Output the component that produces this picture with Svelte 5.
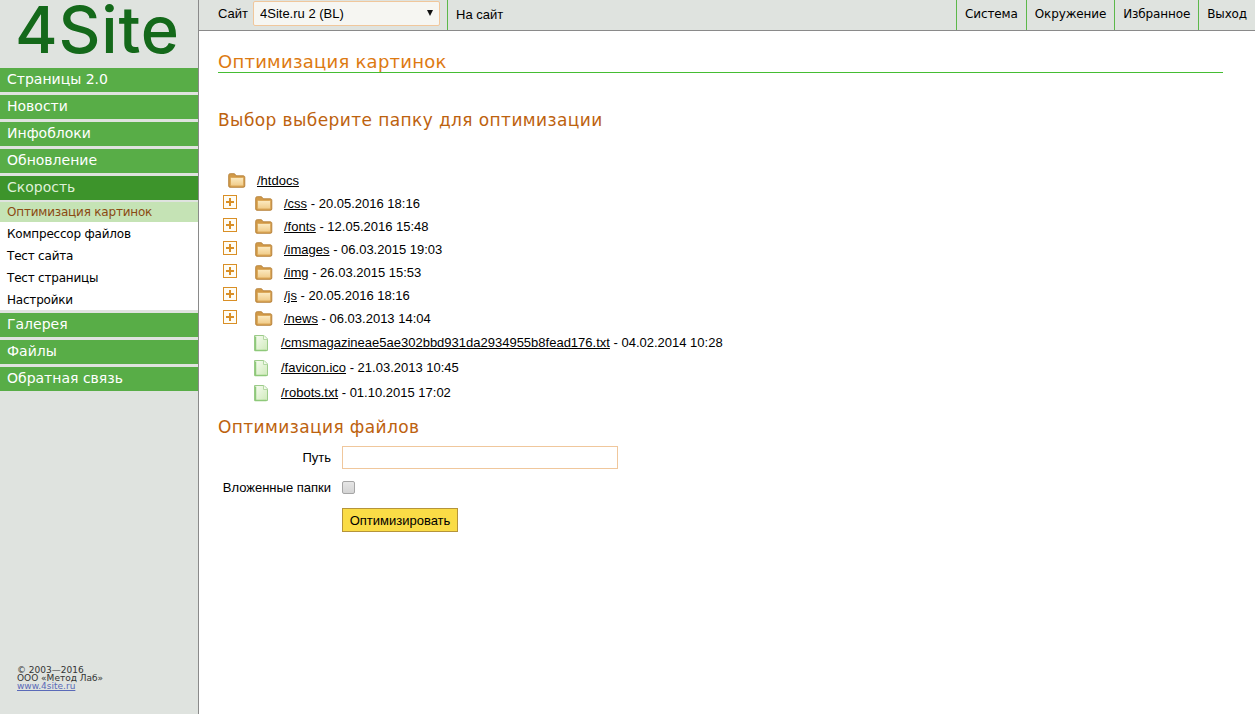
<script>
  const menuTop = ['Страницы 2.0', 'Новости', 'Инфоблоки', 'Обновление'];
  const subMenu = ['Оптимизация картинок', 'Компрессор файлов', 'Тест сайта', 'Тест страницы', 'Настройки'];
  const menuBottom = ['Галерея', 'Файлы', 'Обратная связь'];
  const topLinks = ['Система', 'Окружение', 'Избранное', 'Выход'];
  const folders = [
    { name: '/css', date: '20.05.2016 18:16' },
    { name: '/fonts', date: '12.05.2016 15:48' },
    { name: '/images', date: '06.03.2015 19:03' },
    { name: '/img', date: '26.03.2015 15:53' },
    { name: '/js', date: '20.05.2016 18:16' },
    { name: '/news', date: '06.03.2013 14:04' }
  ];
  const files = [
    { name: '/cmsmagazineae5ae302bbd931da2934955b8fead176.txt', date: '04.02.2014 10:28' },
    { name: '/favicon.ico', date: '21.03.2013 10:45' },
    { name: '/robots.txt', date: '01.10.2015 17:02' }
  ];
</script>

{#snippet folder()}
  <svg class="folder" width="18" height="15" viewBox="0 0 18 15">
    <defs>
      <linearGradient id="folder-face" x1="0" y1="0" x2="0" y2="1">
        <stop offset="0" stop-color="#fcebc2" />
        <stop offset="1" stop-color="#f0cb88" />
      </linearGradient>
    </defs>
    <path d="M.7 13V2.200C.7 1.300 1.300.7 2.200.7h3.800c.7 0 1 .3 1.400 1l.6 1.100h7.200c1 0 1.600.6 1.600 1.500V13c0 .8-.5 1.300-1.300 1.300H2c-.8 0-1.300-.5-1.300-1.300z" fill="#d29a48" stroke="#b5813a" stroke-width=".9" />
    <rect x="2.500" y="4.500" width="13" height="8.500" rx="1" fill="url(#folder-face)" stroke="#dcaa5c" />
  </svg>
{/snippet}

{#snippet file()}
  <svg class="file" width="16" height="18" viewBox="0 0 16 18">
    <defs>
      <linearGradient id="file-face" x1="0" y1="0" x2="1" y2="1">
        <stop offset="0" stop-color="#f8fcf3" />
        <stop offset="1" stop-color="#cfeaba" />
      </linearGradient>
    </defs>
    <path d="M1.500 1.500h9.500l3.500 3.500v11.500h-13z" fill="url(#file-face)" stroke="#9ccb8a" />
    <path d="M2.500 2.500v14h11" stroke="#8ec97a" stroke-width="1.500" fill="none" />
    <path d="M10.500 1.500v4h4" fill="#f2faeb" stroke="#b4d8a4" />
  </svg>
{/snippet}

<div class="page">
  <aside class="sidebar">
    <div class="logo">4Site</div>
    <nav class="menu">
      {#each menuTop as item}
        <a class="menu-item" href="#top">{item}</a>
      {/each}
      <a class="menu-item active" href="#top">Скорость</a>
      <div class="submenu">
        {#each subMenu as item, i}
          <a class="sub-item" class:current={i === 0} href="#top">{item}</a>
        {/each}
      </div>
      {#each menuBottom as item}
        <a class="menu-item" href="#top">{item}</a>
      {/each}
    </nav>
    <footer class="copyright">
      <div>© 2003—2016</div>
      <div>ООО «Метод Лаб»</div>
      <a href="#top">www.4site.ru</a>
    </footer>
  </aside>

  <div class="main">
    <header class="topbar">
      <div class="site-pick">
        <span>Сайт</span>
        <div class="select-wrap">
          <select>
            <option>4Site.ru 2 (BL)</option>
          </select>
        </div>
      </div>
      <a class="to-site" href="#top">На сайт</a>
      <div class="top-links">
        {#each topLinks as item}
          <a href="#top">{item}</a>
        {/each}
      </div>
    </header>

    <main class="content">
      <h1>Оптимизация картинок</h1>
      <h2 class="pick-title">Выбор выберите папку для оптимизации</h2>

      <div class="tree">
        <div class="row root">
          {@render folder()}
          <span><a href="#top">/htdocs</a></span>
        </div>
        {#each folders as f}
          <div class="row">
            <span class="plus"></span>
            {@render folder()}
            <span><a href="#top">{f.name}</a> - {f.date}</span>
          </div>
        {/each}
        {#each files as f}
          <div class="row file-row">
            {@render file()}
            <span><a href="#top">{f.name}</a> - {f.date}</span>
          </div>
        {/each}
      </div>

      <h2 class="form-title">Оптимизация файлов</h2>
      <form class="form">
        <label for="path">Путь</label>
        <input id="path" type="text" />
        <label for="nested">Вложенные папки</label>
        <input id="nested" type="checkbox" />
        <button type="button">Оптимизировать</button>
      </form>
    </main>
  </div>
</div>

<style>
  :global(body) {
    margin: 0;
    background: #fff;
    color: #000;
    font-family: "Liberation Sans", Arial, sans-serif;
    font-size: 13px;
  }

  a {
    color: inherit;
  }

  .page {
    display: flex;
    min-height: 714px;
  }

  .sidebar {
    display: flex;
    flex-direction: column;
    flex: none;
    width: 198px;
    background: #dfe3df;
    border-right: 1px solid #8a8a8a;
    font-family: "DejaVu Sans", sans-serif;
  }

  .logo {
    height: 68px;
    padding-left: 15px;
    box-sizing: border-box;
    font-family: Inter, sans-serif;
    font-size: 65px;
    font-weight: 500;
    line-height: 60px;
    letter-spacing: 0.8px;
    color: #14691a;
  }

  .menu {
    display: flex;
    flex-direction: column;
  }

  .menu-item {
    height: 24px;
    margin-bottom: 3px;
    padding-left: 7px;
    background: #58ad47;
    color: #fff;
    font-size: 14px;
    line-height: 22px;
    text-decoration: none;
  }

  .menu-item.active {
    margin-bottom: 2px;
    background: #3d942b;
    color: #dff0d8;
  }

  .submenu {
    display: flex;
    flex-direction: column;
    margin-bottom: 3px;
    background: #fff;
  }

  .sub-item {
    height: 22px;
    padding-left: 7px;
    font-size: 12px;
    line-height: 24px;
    letter-spacing: -0.2px;
    color: #000;
    text-decoration: none;
  }

  .sub-item.current {
    height: 20px;
    line-height: 20px;
    background: #c5e3b5;
    color: #8b4a12;
  }

  .copyright {
    margin-top: auto;
    padding: 0 0 24px 17px;
    font-size: 9px;
    line-height: 8px;
    color: #333;
  }

  .copyright a {
    color: #5a6ab8;
  }

  .main {
    flex: 1;
    min-width: 0;
  }

  .topbar {
    display: flex;
    height: 30px;
    align-items: stretch;
    background: #dfe3df;
    border-bottom: 1px solid #8a8a8a;
  }

  .site-pick {
    display: flex;
    align-items: flex-start;
    gap: 5px;
    width: 229px;
    padding: 1px 0 0 19px;
    border-right: 1px solid #5cb84a;
  }

  .site-pick span {
    line-height: 25px;
  }

  .select-wrap {
    position: relative;
  }

  /* native arrow of this browser differs, so draw the solid triangle */
  .select-wrap::after {
    content: "";
    position: absolute;
    top: 9px;
    right: 7px;
    border-top: 6px solid #111;
    border-left: 3px solid transparent;
    border-right: 3px solid transparent;
    pointer-events: none;
  }

  select {
    display: block;
    appearance: none;
    width: 187px;
    height: 25px;
    padding: 0 0 0 6px;
    background: #f6f6f2;
    border: 1px solid #f0c79c;
    border-radius: 2px;
    color: #000;
    font: 13px "Liberation Sans", Arial, sans-serif;
  }

  .to-site {
    padding-left: 8px;
    line-height: 29px;
    text-decoration: none;
  }

  .top-links {
    display: flex;
    margin-left: auto;
    font-family: "DejaVu Sans", sans-serif;
    font-size: 12px;
    letter-spacing: -0.13px;
  }

  .top-links a {
    padding: 0 8px;
    border-left: 1px solid #5cb84a;
    line-height: 29px;
    text-decoration: none;
  }

  .content {
    padding: 0 32px 0 19px;
  }

  h1,
  h2 {
    margin: 0;
    font-family: "DejaVu Sans", sans-serif;
    font-weight: normal;
  }

  h1 {
    height: 42px;
    padding-top: 20px;
    box-sizing: border-box;
    font-size: 18px;
    letter-spacing: 0.25px;
    line-height: 21px;
    color: #dd7a12;
    border-bottom: 1px solid #45bd33;
  }

  h2 {
    font-size: 17px;
    letter-spacing: 0.4px;
    line-height: 22px;
    color: #bd620e;
  }

  .pick-title {
    margin-top: 36px;
  }

  .tree {
    margin-top: 38px;
  }

  .row {
    display: flex;
    align-items: center;
    height: 23px;
    padding-left: 5px;
  }

  .row .folder {
    flex: none;
    margin: 0 11px 0 18px;
  }

  .row.root .folder {
    margin-left: 5px;
  }

  .plus {
    position: relative;
    flex: none;
    width: 12px;
    height: 12px;
    margin-top: -3px;
    border: 1px solid #d98f26;
    background: #fffdf5;
  }

  .plus::before,
  .plus::after {
    content: "";
    position: absolute;
    background: #d98f26;
  }

  .plus::before {
    left: 2px;
    right: 2px;
    top: 5px;
    height: 2px;
  }

  .plus::after {
    top: 2px;
    bottom: 2px;
    left: 5px;
    width: 2px;
  }

  .file-row {
    height: 25px;
    padding-left: 35px;
  }

  .file-row .file {
    flex: none;
    margin-right: 12px;
  }

  .form-title {
    margin-top: 11px;
  }

  .form {
    display: grid;
    grid-template-columns: 113px auto;
    justify-content: start;
    justify-items: start;
    column-gap: 11px;
    align-items: center;
    margin-top: 8px;
  }

  .form label {
    justify-self: end;
    white-space: nowrap;
  }

  #path {
    width: 276px;
    height: 23px;
    box-sizing: border-box;
    border: 1px solid #f0c79c;
    background: #fff;
    outline: none;
  }

  #nested {
    appearance: none;
    width: 13px;
    height: 13px;
    margin: 12px 0;
    background: linear-gradient(#e6e6e6, #d4d4d4);
    border: 1px solid #a6a6a6;
    border-radius: 2px;
  }

  button {
    grid-column: 2;
    margin-top: 2px;
    width: 116px;
    height: 24px;
    padding: 0;
    background: #fadc46;
    border: 1px solid #b5943a;
    font: 13px "Liberation Sans", Arial, sans-serif;
    color: #000;
  }
</style>
